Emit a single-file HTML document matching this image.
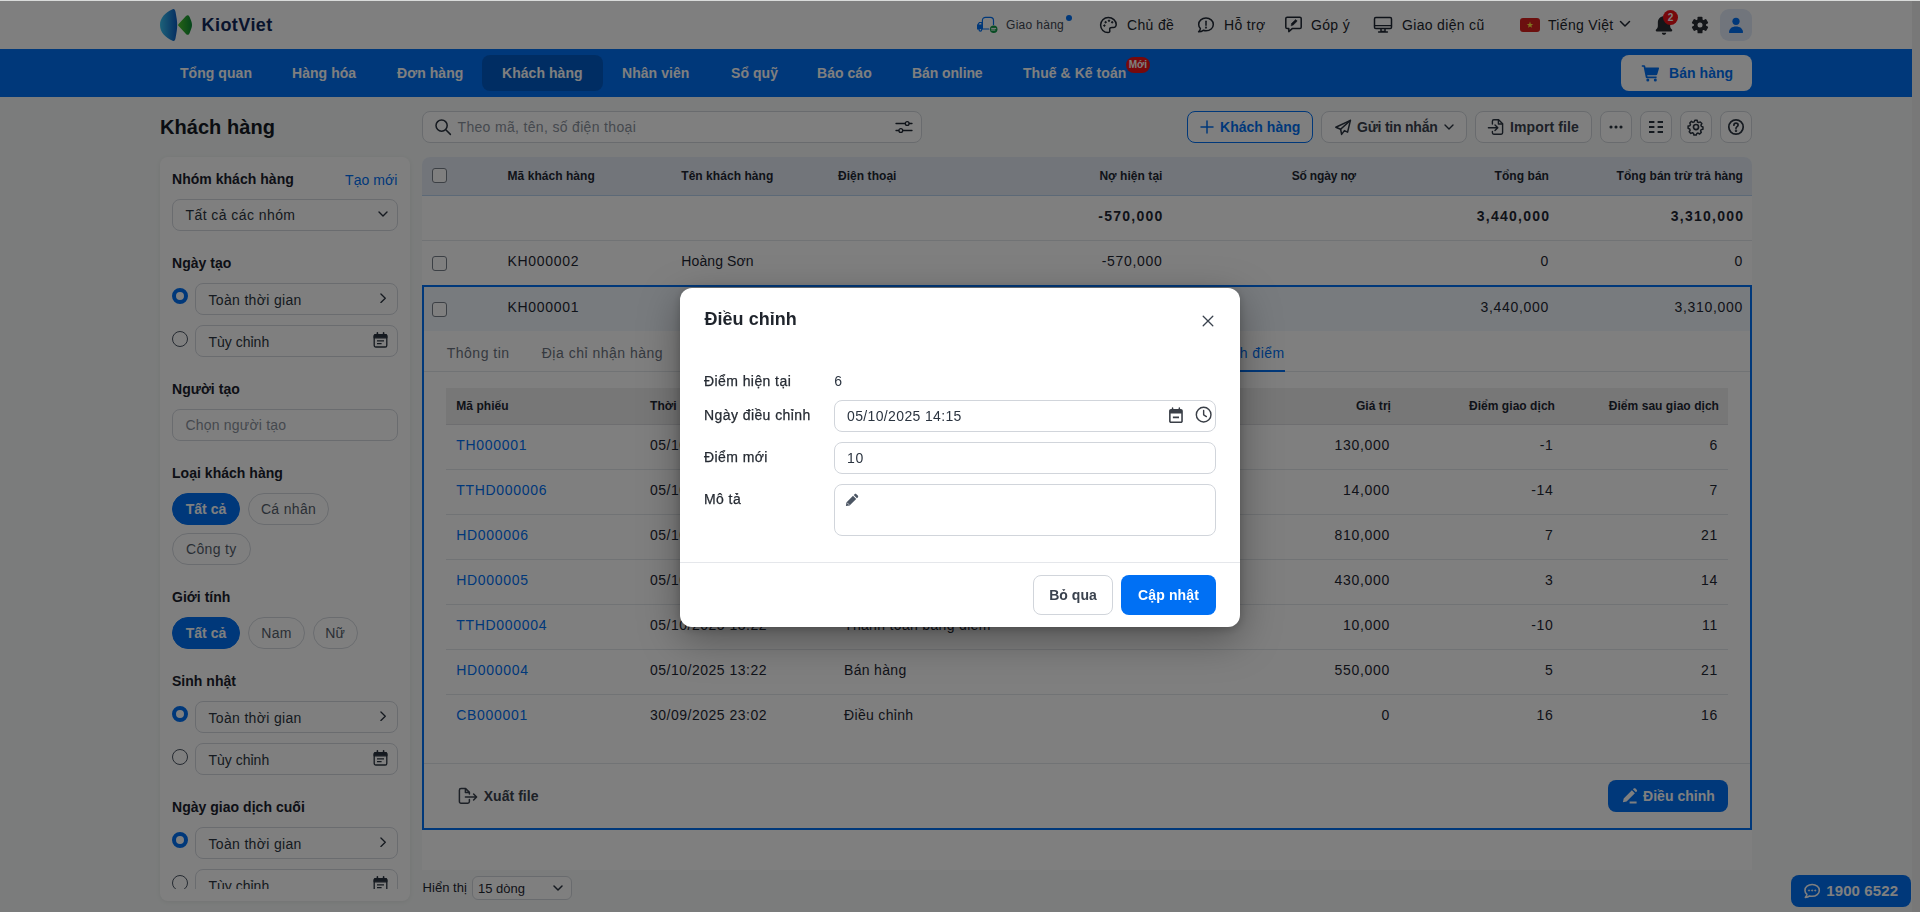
<!DOCTYPE html>
<html lang="vi">
<head>
<meta charset="utf-8">
<title>Khách hàng</title>
<style>
*{box-sizing:border-box;margin:0;padding:0}
html,body{width:1920px;height:912px;overflow:hidden}
body{font-family:"Liberation Sans",sans-serif;font-size:14px;color:#1f2733;background:#f6f9f8;position:relative;letter-spacing:.33px}
.abs{position:absolute}
b,.b{font-weight:700;letter-spacing:.03px}
.num{letter-spacing:.7px}
svg{display:block}
#page{position:absolute;left:0;top:0;width:1912px;height:912px;overflow:hidden;background:#f6f9f8}
#sbar{position:absolute;left:1912px;top:0;width:8px;height:912px;background:#f0f0f0}
#topline{position:absolute;left:0;top:0;width:1920px;height:1px;background:#d9dbda;z-index:50}
#overlay{position:absolute;left:0;top:0;width:1920px;height:912px;background:rgba(0,0,0,.5);z-index:20}
/* header */
#hdr{position:absolute;left:0;top:0;width:1912px;height:49px;background:#fff}
#nav{position:absolute;left:0;top:49px;width:1912px;height:48px;background:#0070f4}
.nv{position:absolute;top:0;height:48px;line-height:48px;color:#fff;font-weight:700;font-size:14px;letter-spacing:.05px;white-space:nowrap}
.hi{position:absolute;top:1px;height:49px;line-height:49px;white-space:nowrap;font-size:14px;color:#21252c}
.ic{position:absolute}
/* buttons */
.btn{position:absolute;top:111px;height:32px;border:1px solid #d3d7dd;border-radius:8px;background:#fff;font-weight:700;letter-spacing:.03px;color:#3a424e;white-space:nowrap}
.btn span{position:absolute;top:0;line-height:30px}
/* sidebar */
#side{position:absolute;left:160px;top:157px;width:250px;height:744px;background:#fff;border-radius:8px;box-shadow:0 1px 5px rgba(0,0,0,.07)}
#sidein{position:absolute;left:0;top:0;width:250px;height:732px;overflow:hidden}
.sl{position:absolute;left:12px;font-weight:700;letter-spacing:.03px;color:#1a212c;line-height:16px;white-space:nowrap}
.box{position:absolute;height:32px;border:1px solid #d5d9df;border-radius:8px;background:#fff;line-height:30px;white-space:nowrap;color:#2b3440}
.box span{position:absolute;left:12.5px;top:1px}
.rad{position:absolute;left:12px;width:16px;height:16px;border-radius:50%;border:1px solid #4b5563;background:#fff}
.rad.on{border:4.5px solid #0070f4}
.pill{position:absolute;height:32px;border-radius:16px;border:1px solid #d5d9df;line-height:30px;color:#555e6b;white-space:nowrap;text-align:center}
.pill.on{background:#0070f4;border-color:#0070f4;color:#fff;font-weight:700;letter-spacing:.03px}
/* table */
#tbl{position:absolute;left:422px;top:157px;width:1330px;height:713px;background:#fff;border-radius:8px 8px 0 0}
#th{position:absolute;left:0;top:0;width:1330px;height:39px;background:#e4ebf5;border-radius:8px 8px 0 0;border-bottom:1px solid #b9d2ef}
.th{position:absolute;top:0;line-height:38px;font-size:12px;font-weight:700;letter-spacing:.05px;color:#1f2733;white-space:nowrap}
.td{position:absolute;white-space:nowrap;line-height:20px}
.r{text-align:right}
.cb{position:absolute;margin:-.4px 0 0 -.4px;width:15px;height:15px;border:1px solid #79808b;border-radius:3px;background:#fff}
.hl{position:absolute;height:1px;background:#e3e6ea}
a,.lk{color:#0070f4;text-decoration:none}
/* modal */
#modal{will-change:transform;position:absolute;left:680px;top:288px;width:560px;height:339px;background:#fff;border-radius:12px;z-index:30;box-shadow:0 12px 40px rgba(0,0,0,.35),0 2px 10px rgba(0,0,0,.2)}
.ml{position:absolute;left:24px;line-height:20px;color:#262b33;white-space:nowrap;letter-spacing:.42px;-webkit-text-stroke:.25px #262b33}
.mi{position:absolute;left:154px;width:382px;height:32px;border:1px solid #d1d5db;border-radius:8px;background:#fff}
.mi span{position:absolute;left:12px;top:0;line-height:31px;color:#2b3440}
</style>
</head>
<body>
<div id="page">
  <div id="hdr">
    <!-- logo -->
    <svg class="ic" style="left:159px;top:8px" width="35" height="34" viewBox="0 0 35 34">
      <defs>
        <linearGradient id="lgb" x1="0" y1="0" x2="1" y2="0"><stop offset="0" stop-color="#3ac4f2"/><stop offset="1" stop-color="#0c5cc2"/></linearGradient>
        <linearGradient id="lgg" x1="0" y1="0" x2="1" y2="0"><stop offset="0" stop-color="#4cc62c"/><stop offset="1" stop-color="#0a8a36"/></linearGradient>
      </defs>
      <path fill="url(#lgb)" d="M13.6 1.2 C15.2 0.3 16.2 1.6 16.6 4.2 C17.6 10 18.2 13 18.2 17 C18.2 21 17.6 24.5 16.6 29.8 C16.2 32.4 15.2 33.6 13.6 32.8 C6.5 29.5 1 24.5 1 17 C1 9.5 6.5 4.5 13.6 1.2 Z"/>
      <path fill="url(#lgg)" d="M19.6 15.9 L27 8 C28.4 6.6 29.8 6.9 30.5 8.8 C31.8 12 33 14.5 33 17 C33 19.5 31.8 22 30.5 25.2 C29.8 27.1 28.4 27.4 27 26 L19.6 18.1 C19 17.5 19 16.5 19.6 15.9 Z"/>
    </svg>
    <div class="abs" style="left:201.5px;top:1.4px;line-height:49px;font-size:18px;font-weight:700;letter-spacing:.45px;color:#12295a">KiotViet</div>

    <!-- Giao hàng -->
    <svg class="ic" style="left:976px;top:15px" width="23" height="19" viewBox="0 0 23 19" fill="none">
      <path d="M6.4 14V5.4C6.4 3.4 7.8 2.3 9.5 2.3H14.4C16.4 2.3 17.5 3.5 17.5 5.4V9.6M6.4 14H12.8" stroke="#0070f4" stroke-width="1.2" stroke-linecap="round"/>
      <path d="M1 9.7L3.1 6.9H6.4V14.5H1.6C1.2 14.5 1 14.3 1 13.9Z" fill="#0070f4"/>
      <path d="M3.7 8.1H5.3V9.5H2.7Z" fill="#fff"/>
      <circle cx="4.4" cy="14.8" r="1.9" fill="#0070f4"/><circle cx="4.4" cy="14.8" r=".8" fill="#fff"/>
      <circle cx="17.7" cy="14.2" r="3.75" fill="#109a48"/>
      <path d="M15.2 13.4H20.1M15.2 15H19.3" stroke="#fff" stroke-width="1"/>
    </svg>
    <div class="hi" style="left:1006px;font-size:12px;color:#3d4551;letter-spacing:.3px">Giao hàng</div>
    <div class="abs" style="left:1066px;top:15px;width:6px;height:6px;border-radius:50%;background:#0070f4"></div>

    <!-- Chủ đề -->
    <svg class="ic" style="left:1099px;top:16px" width="19" height="18" viewBox="0 0 19 18" fill="none" stroke="#1f2733" stroke-width="1.5">
      <path d="M9.3 1.5C5 1.5 1.6 4.9 1.6 9.1C1.6 13.3 5 16.6 9 16.6C10.4 16.6 11 15.8 10.8 14.7C10.6 13.6 10.3 12.7 11.2 11.9C12 11.2 13 11.4 14.2 11.5C16 11.6 17.2 10.4 17.2 8.6C17.2 4.7 13.7 1.5 9.3 1.5Z"/>
      <circle cx="5.4" cy="9.6" r=".75" fill="#1f2733" stroke-width="1"/><circle cx="6.6" cy="6.2" r=".75" fill="#1f2733" stroke-width="1"/><circle cx="10" cy="4.7" r=".75" fill="#1f2733" stroke-width="1"/><circle cx="13.2" cy="6.3" r=".75" fill="#1f2733" stroke-width="1"/>
    </svg>
    <div class="hi" style="left:1127px">Chủ đề</div>

    <!-- Hỗ trợ -->
    <svg class="ic" style="left:1196px;top:16px" width="19" height="18" viewBox="0 0 19 18" fill="none" stroke="#1f2733" stroke-width="1.5" stroke-linecap="round" stroke-linejoin="round">
      <path d="M10 2C5.9 2 2.7 4.8 2.7 8.4C2.7 10 3.3 11.4 4.4 12.5C4.3 13.6 3.7 14.8 2.6 15.8C4.6 15.8 6.2 15.2 7.3 14.3C8.1 14.6 9 14.8 10 14.8C14.1 14.8 17.3 12 17.3 8.4C17.3 4.8 14.1 2 10 2Z"/>
      <path d="M10 5.3V9.2"/><circle cx="10" cy="11.6" r=".35" fill="#1f2733"/>
    </svg>
    <div class="hi" style="left:1224px">Hỗ trợ</div>

    <!-- Góp ý -->
    <svg class="ic" style="left:1284px;top:15px" width="19" height="19" viewBox="0 0 19 19" fill="none" stroke="#1f2733" stroke-width="1.5" stroke-linejoin="round" stroke-linecap="round">
      <path d="M3.2 2.2H15.8C16.6 2.2 17.2 2.8 17.2 3.6V12.2C17.2 13 16.6 13.6 15.8 13.6H8.2L4.8 16.6V13.6H3.2C2.4 13.6 1.8 13 1.8 12.2V3.6C1.8 2.8 2.4 2.2 3.2 2.2Z"/>
      <path d="M7.2 10.4L7.7 8.3L11.7 4.6L13.2 6.1L9.3 9.9Z" fill="#1f2733" stroke-width=".6"/>
    </svg>
    <div class="hi" style="left:1311px">Góp ý</div>

    <!-- Giao diện cũ -->
    <svg class="ic" style="left:1373px;top:16px" width="20" height="18" viewBox="0 0 20 18" fill="none" stroke="#1f2733" stroke-width="1.5" stroke-linejoin="round" stroke-linecap="round">
      <rect x="1.5" y="1.6" width="17" height="11" rx="1.3"/>
      <path d="M1.5 9.6H18.5" stroke-width="1.2"/>
      <path d="M8 12.8V15.6H12V12.8M5.6 15.9H14.4"/>
    </svg>
    <div class="hi" style="left:1402px">Giao diện cũ</div>

    <!-- flag -->
    <svg class="ic" style="left:1520px;top:17.5px" width="20" height="14" viewBox="0 0 20 14">
      <rect width="20" height="14" rx="3" fill="#d8201f"/>
      <path fill="#ffeb3b" d="M10 3.6L10.85 5.95H13.3L11.3 7.45L12.05 9.85L10 8.4L7.95 9.85L8.7 7.45L6.7 5.95H9.15Z"/>
    </svg>
    <div class="hi" style="left:1548px">Tiếng Việt</div>
    <svg class="ic" style="left:1619px;top:20px" width="12" height="8" viewBox="0 0 12 8" fill="none" stroke="#1f2733" stroke-width="1.5" stroke-linecap="round" stroke-linejoin="round"><path d="M1.5 1.5L6 6L10.5 1.5"/></svg>

    <!-- bell -->
    <svg class="ic" style="left:1653px;top:13.6px" width="22" height="23.4" viewBox="0 0 20 22" preserveAspectRatio="none">
      <path fill="#292d33" d="M10 2C6.7 2 4.4 4.5 4.4 7.8V11.2C4.4 12.6 3.8 13.6 2.8 14.6C2.2 15.2 2.5 16.4 3.5 16.4H16.5C17.5 16.4 17.8 15.2 17.2 14.6C16.2 13.6 15.6 12.6 15.6 11.2V7.8C15.6 4.5 13.3 2 10 2ZM8 17.6C8 18.8 8.9 19.6 10 19.6C11.1 19.6 12 18.8 12 17.6Z"/>
    </svg>
    <div class="abs" style="left:1663px;top:10.2px;width:15px;height:15px;border-radius:50%;background:#ee1016;color:#fff;font-size:10px;font-weight:700;line-height:15px;text-align:center;letter-spacing:0">2</div>

    <!-- gear -->
    <svg class="ic" style="left:1690px;top:14.9px" width="20" height="20" viewBox="-10 -10 20 20"><g fill="#292d33"><rect x="-2.5" y="-8.3" width="5" height="4.4" rx=".9" transform="rotate(0)"/><rect x="-2.5" y="-8.3" width="5" height="4.4" rx=".9" transform="rotate(60)"/><rect x="-2.5" y="-8.3" width="5" height="4.4" rx=".9" transform="rotate(120)"/><rect x="-2.5" y="-8.3" width="5" height="4.4" rx=".9" transform="rotate(180)"/><rect x="-2.5" y="-8.3" width="5" height="4.4" rx=".9" transform="rotate(240)"/><rect x="-2.5" y="-8.3" width="5" height="4.4" rx=".9" transform="rotate(300)"/><circle r="6.1"/></g><circle r="2.5" fill="#fff"/></svg>

    <!-- user -->
    <div class="abs" style="left:1720px;top:9px;width:32px;height:32px;border-radius:9px;background:#e2ebf9"></div>
    <svg class="ic" style="left:1728px;top:17px" width="16" height="16" viewBox="0 0 16 16">
      <circle cx="8" cy="4.3" r="3.6" fill="#0070f4"/>
      <path fill="#0070f4" d="M1 15.6C1 11.7 4 9.6 8 9.6C12 9.6 15 11.7 15 15.6C15 15.9 14.8 16 14.5 16H1.5C1.2 16 1 15.9 1 15.6Z"/>
    </svg>
  </div>
  <div id="nav">
    <div class="abs" style="left:482px;top:6px;width:121px;height:36px;border-radius:8px;background:#005bc7"></div>
    <div class="nv" style="left:180px">Tổng quan</div>
    <div class="nv" style="left:292px">Hàng hóa</div>
    <div class="nv" style="left:397px">Đơn hàng</div>
    <div class="nv" style="left:502px">Khách hàng</div>
    <div class="nv" style="left:622px">Nhân viên</div>
    <div class="nv" style="left:731px">Sổ quỹ</div>
    <div class="nv" style="left:817px">Báo cáo</div>
    <div class="nv" style="left:912px;letter-spacing:-.1px">Bán online</div>
    <div class="nv" style="left:1023px">Thuế &amp; Kế toán</div>
    <div class="abs" style="left:1125.7px;top:7.6px;width:24.3px;height:16px;border-radius:8px;background:#ec1218;color:#fff;font-size:10px;font-weight:700;line-height:15px;text-align:center;letter-spacing:0">Mới</div>
    <div class="abs" style="left:1621px;top:6px;width:131px;height:36px;border-radius:8px;background:#fff"></div>
    <svg class="ic" style="left:1641px;top:15px" width="19" height="18" viewBox="0 0 19 18">
      <path fill="#0070f4" d="M.8 1.2H3.2C3.7 1.2 4.1 1.5 4.2 2L4.5 3.4H17.2C17.8 3.4 18.2 4 18 4.5L16.3 10.2C16.1 10.8 15.6 11.2 15 11.2H6.2L6.5 12.6H15.6V14.2H5.8C5.3 14.2 4.9 13.9 4.8 13.4L2.6 2.8H.8Z"/>
      <circle cx="6.8" cy="16" r="1.5" fill="#0070f4"/><circle cx="14.3" cy="16" r="1.5" fill="#0070f4"/>
    </svg>
    <div class="nv" style="left:1669px;color:#0070f4">Bán hàng</div>
  </div>
  <div id="main">
    <div class="abs b" style="left:160px;top:112px;font-size:20px;line-height:30px;color:#141a24;letter-spacing:.05px">Khách hàng</div>
    <!-- search -->
    <div class="abs" style="left:422px;top:111px;width:500px;height:32px;border:1px solid #d3d7dd;border-radius:8px;background:#fff"></div>
    <svg class="ic" style="left:434px;top:118px" width="18" height="18" viewBox="0 0 18 18" fill="none" stroke="#2b3440" stroke-width="1.5" stroke-linecap="round"><circle cx="7.6" cy="7.6" r="5.6"/><path d="M11.8 11.8L16.4 16.4"/></svg>
    <div class="abs" style="left:457.5px;top:111px;line-height:32px;color:#8b929d;white-space:nowrap;letter-spacing:.33px">Theo mã, tên, số điện thoại</div>
    <svg class="ic" style="left:895px;top:120px" width="18" height="14" viewBox="0 0 18 14" fill="none" stroke="#1f2733" stroke-width="1.3" stroke-linecap="round"><path d="M1 3.5H10M14.4 3.5H17M1 10.5H3.6M8 10.5H17"/><circle cx="12.2" cy="3.5" r="1.9"/><circle cx="5.8" cy="10.5" r="1.9"/></svg>

    <div id="side"><div id="sidein">
      <div class="sl" style="top:14.00px">Nhóm khách hàng</div>
      <div class="abs lk" style="left:185px;top:15.25px;line-height:16px;white-space:nowrap;letter-spacing:.08px">Tạo mới</div>
      <div class="box" style="left:12px;top:42px;width:226px"><span style="letter-spacing:.43px;top:0">Tất cả các nhóm</span><svg class="ic" style="left:205.2px;top:10.8px" width="10" height="7" viewBox="0 0 10 7" fill="none" stroke="#2b3440" stroke-width="1.4" stroke-linecap="round" stroke-linejoin="round"><path d="M1 1L5 5L9 1"/></svg></div>
      <div class="sl" style="top:98.00px">Ngày tạo</div>
      <div class="rad on" style="top:131.3px"></div>
      <div class="box" style="left:35px;top:126px;width:203px"><span>Toàn thời gian</span><svg class="ic" style="left:184.1px;top:9.1px" width="6.6" height="10.4" viewBox="0 0 7 11" fill="none" stroke="#2b3440" stroke-width="1.4" stroke-linecap="round" stroke-linejoin="round"><path d="M1 1L5.6 5.5L1 10"/></svg></div>
      <div class="rad" style="top:174px"></div>
      <div class="box" style="left:35px;top:168px;width:203px"><span style="letter-spacing:0">Tùy chỉnh</span><svg class="ic" style="left:176.5px;top:6px" width="15" height="16" viewBox="0 0 15 16" fill="none" stroke="#2b3440" stroke-width="1.3" stroke-linejoin="round"><rect x="1.2" y="2.6" width="12.6" height="12.4" rx="1.6"/><path d="M1.2 3.6C1.2 3 1.7 2.6 2.4 2.6H12.6C13.3 2.6 13.8 3 13.8 3.6V5.8H1.2Z" fill="#2b3440"/><path d="M4.4 .8V3.4M10.6 .8V3.4" stroke-linecap="round" stroke-width="1.6"/><path d="M4 8.8H11M4 11.6H8.6" stroke-width="1.2"/></svg></div>
      <div class="sl" style="top:224.00px">Người tạo</div>
      <div class="box" style="left:12px;top:252px;width:226px;color:#8b929d"><span style="top:0;letter-spacing:.2px">Chọn người tạo</span></div>
      <div class="sl" style="top:308.00px">Loại khách hàng</div>
      <div class="pill on" style="left:12px;top:336px;width:68px">Tất cả</div>
      <div class="pill" style="left:88px;top:336px;width:81px">Cá nhân</div>
      <div class="pill" style="left:12px;top:376px;width:78.5px">Công ty</div>
      <div class="sl" style="top:432.00px">Giới tính</div>
      <div class="pill on" style="left:12px;top:460px;width:68px">Tất cả</div>
      <div class="pill" style="left:88px;top:460px;width:57px">Nam</div>
      <div class="pill" style="left:153px;top:460px;width:44.5px">Nữ</div>
      <div class="sl" style="top:516.00px">Sinh nhật</div>
      <div class="rad on" style="top:549.3px"></div>
      <div class="box" style="left:35px;top:544px;width:203px"><span>Toàn thời gian</span><svg class="ic" style="left:184.1px;top:9.1px" width="6.6" height="10.4" viewBox="0 0 7 11" fill="none" stroke="#2b3440" stroke-width="1.4" stroke-linecap="round" stroke-linejoin="round"><path d="M1 1L5.6 5.5L1 10"/></svg></div>
      <div class="rad" style="top:592px"></div>
      <div class="box" style="left:35px;top:586px;width:203px"><span style="letter-spacing:0">Tùy chỉnh</span><svg class="ic" style="left:176.5px;top:6px" width="15" height="16" viewBox="0 0 15 16" fill="none" stroke="#2b3440" stroke-width="1.3" stroke-linejoin="round"><rect x="1.2" y="2.6" width="12.6" height="12.4" rx="1.6"/><path d="M1.2 3.6C1.2 3 1.7 2.6 2.4 2.6H12.6C13.3 2.6 13.8 3 13.8 3.6V5.8H1.2Z" fill="#2b3440"/><path d="M4.4 .8V3.4M10.6 .8V3.4" stroke-linecap="round" stroke-width="1.6"/><path d="M4 8.8H11M4 11.6H8.6" stroke-width="1.2"/></svg></div>
      <div class="sl" style="top:642.00px">Ngày giao dịch cuối</div>
      <div class="rad on" style="top:675.3px"></div>
      <div class="box" style="left:35px;top:670px;width:203px"><span>Toàn thời gian</span><svg class="ic" style="left:184.1px;top:9.1px" width="6.6" height="10.4" viewBox="0 0 7 11" fill="none" stroke="#2b3440" stroke-width="1.4" stroke-linecap="round" stroke-linejoin="round"><path d="M1 1L5.6 5.5L1 10"/></svg></div>
      <div class="rad" style="top:718px"></div>
      <div class="box" style="left:35px;top:712px;width:203px"><span style="letter-spacing:0">Tùy chỉnh</span><svg class="ic" style="left:176.5px;top:6px" width="15" height="16" viewBox="0 0 15 16" fill="none" stroke="#2b3440" stroke-width="1.3" stroke-linejoin="round"><rect x="1.2" y="2.6" width="12.6" height="12.4" rx="1.6"/><path d="M1.2 3.6C1.2 3 1.7 2.6 2.4 2.6H12.6C13.3 2.6 13.8 3 13.8 3.6V5.8H1.2Z" fill="#2b3440"/><path d="M4.4 .8V3.4M10.6 .8V3.4" stroke-linecap="round" stroke-width="1.6"/><path d="M4 8.8H11M4 11.6H8.6" stroke-width="1.2"/></svg></div>
    </div></div>
    <div id="tbl">
      <div id="th">
        <div class="cb" style="left:10.5px;top:11.5px"></div>
        <div class="th" style="left:85.5px">Mã khách hàng</div>
        <div class="th" style="left:259.25px">Tên khách hàng</div>
        <div class="th" style="left:416px">Điện thoại</div>
        <div class="th r" style="right:589.5px">Nợ hiện tại</div>
        <div class="th r" style="right:396px;letter-spacing:-.15px">Số ngày nợ</div>
        <div class="th r" style="right:203px">Tổng bán</div>
        <div class="th r" style="right:9px">Tổng bán trừ trả hàng</div>
      </div>
      <div class="td b num" style="right:588.5px;top:48.9px;letter-spacing:1.25px">-570,000</div>
      <div class="td b num" style="right:203px;top:48.9px;letter-spacing:1.25px;margin-right:-1.25px">3,440,000</div>
      <div class="td b num" style="right:9px;top:48.9px;letter-spacing:1.25px;margin-right:-1.25px">3,310,000</div>
      <div class="hl" style="left:0;top:83px;width:1330px"></div>
      <div class="cb" style="left:10.5px;top:99.5px"></div>
      <div class="td num" style="left:85.5px;top:94.4px;">KH000002</div>
      <div class="td " style="left:259.25px;top:94.4px;letter-spacing:.12px">Hoàng Sơn</div>
      <div class="td num" style="right:589.5px;top:94.4px;">-570,000</div>
      <div class="td num" style="right:203px;top:94.4px;">0</div>
      <div class="td num" style="right:9px;top:94.4px;">0</div>
      <div class="abs" style="left:0;top:128px;width:1330px;height:545px;border:2px solid #0070f4"></div>
      <div class="abs" style="left:2px;top:130px;width:1326px;height:44px;background:#f0f6fc"></div>
      <div class="cb" style="left:10.5px;top:145.25px"></div>
      <div class="td num" style="left:85.5px;top:140.15px;">KH000001</div>
      <div class="td " style="left:259.25px;top:140.15px;">Nguyễn Văn An</div>
      <div class="td num" style="right:203px;top:140.15px;">3,440,000</div>
      <div class="td num" style="right:9px;top:140.15px;">3,310,000</div>
      <div class="td " style="left:24.75px;top:186.2px;letter-spacing:.5px;color:#6b7380">Thông tin</div>
      <div class="td " style="left:119.75px;top:186.2px;letter-spacing:.5px;color:#6b7380">Địa chỉ nhận hàng</div>
      <div class="td " style="left:272px;top:186.2px;letter-spacing:.5px;color:#6b7380">Nợ cần thu từ khách</div>
      <div class="td " style="left:444px;top:186.2px;letter-spacing:.5px;color:#6b7380">Lịch sử bán/trả hàng</div>
      <div class="td " style="right:467.3px;top:186.2px;letter-spacing:.5px;color:#0070f4">Lịch sử tích điểm</div>
      <div class="hl" style="left:2px;top:214px;width:1326px"></div>
      <div class="abs" style="left:748px;top:212.5px;width:114.70000000000005px;height:2px;background:#0070f4"></div>
      <div class="abs" style="left:24px;top:231px;width:1282px;height:37px;background:#eeeeef;border-bottom:1px solid #dcdde0"></div>
      <div class="th" style="left:34.25px;top:231px;line-height:36px">Mã phiếu</div>
      <div class="th" style="left:228px;top:231px;line-height:36px">Thời gian</div>
      <div class="th" style="left:422px;top:231px;line-height:36px">Loại</div>
      <div class="th" style="right:361px;top:231px;line-height:36px">Giá trị</div>
      <div class="th" style="right:197px;top:231px;line-height:36px">Điểm giao dịch</div>
      <div class="th" style="right:33px;top:231px;line-height:36px">Điểm sau giao dịch</div>
      <div class="td num lk" style="left:34.25px;top:278.15px;">TH000001</div>
      <div class="td num" style="left:228px;top:278.15px;letter-spacing:.5px">05/10/2025 14:10</div>
      <div class="td " style="left:422px;top:278.15px;">Trả hàng</div>
      <div class="td num" style="right:362px;top:278.15px;">130,000</div>
      <div class="td num" style="right:198.5px;top:278.15px;">-1</div>
      <div class="td num" style="right:34px;top:278.15px;">6</div>
      <div class="hl" style="left:24px;top:312px;width:1282px"></div>
      <div class="td num lk" style="left:34.25px;top:323.15px;">TTHD000006</div>
      <div class="td num" style="left:228px;top:323.15px;letter-spacing:.5px">05/10/2025 14:05</div>
      <div class="td " style="left:422px;top:323.15px;">Thanh toán bằng điểm</div>
      <div class="td num" style="right:362px;top:323.15px;">14,000</div>
      <div class="td num" style="right:198.5px;top:323.15px;">-14</div>
      <div class="td num" style="right:34px;top:323.15px;">7</div>
      <div class="hl" style="left:24px;top:357px;width:1282px"></div>
      <div class="td num lk" style="left:34.25px;top:368.15px;">HD000006</div>
      <div class="td num" style="left:228px;top:368.15px;letter-spacing:.5px">05/10/2025 14:05</div>
      <div class="td " style="left:422px;top:368.15px;">Bán hàng</div>
      <div class="td num" style="right:362px;top:368.15px;">810,000</div>
      <div class="td num" style="right:198.5px;top:368.15px;">7</div>
      <div class="td num" style="right:34px;top:368.15px;">21</div>
      <div class="hl" style="left:24px;top:402px;width:1282px"></div>
      <div class="td num lk" style="left:34.25px;top:413.15px;">HD000005</div>
      <div class="td num" style="left:228px;top:413.15px;letter-spacing:.5px">05/10/2025 13:30</div>
      <div class="td " style="left:422px;top:413.15px;">Bán hàng</div>
      <div class="td num" style="right:362px;top:413.15px;">430,000</div>
      <div class="td num" style="right:198.5px;top:413.15px;">3</div>
      <div class="td num" style="right:34px;top:413.15px;">14</div>
      <div class="hl" style="left:24px;top:447px;width:1282px"></div>
      <div class="td num lk" style="left:34.25px;top:458.15px;">TTHD000004</div>
      <div class="td num" style="left:228px;top:458.15px;letter-spacing:.5px">05/10/2025 13:22</div>
      <div class="td " style="left:422px;top:458.15px;">Thanh toán bằng điểm</div>
      <div class="td num" style="right:362px;top:458.15px;">10,000</div>
      <div class="td num" style="right:198.5px;top:458.15px;">-10</div>
      <div class="td num" style="right:34px;top:458.15px;">11</div>
      <div class="hl" style="left:24px;top:492px;width:1282px"></div>
      <div class="td num lk" style="left:34.25px;top:503.15px;">HD000004</div>
      <div class="td num" style="left:228px;top:503.15px;letter-spacing:.5px">05/10/2025 13:22</div>
      <div class="td " style="left:422px;top:503.15px;">Bán hàng</div>
      <div class="td num" style="right:362px;top:503.15px;">550,000</div>
      <div class="td num" style="right:198.5px;top:503.15px;">5</div>
      <div class="td num" style="right:34px;top:503.15px;">21</div>
      <div class="hl" style="left:24px;top:537px;width:1282px"></div>
      <div class="td num lk" style="left:34.25px;top:548.15px;">CB000001</div>
      <div class="td num" style="left:228px;top:548.15px;letter-spacing:.5px">30/09/2025 23:02</div>
      <div class="td " style="left:422px;top:548.15px;">Điều chỉnh</div>
      <div class="td num" style="right:362px;top:548.15px;">0</div>
      <div class="td num" style="right:198.5px;top:548.15px;">16</div>
      <div class="td num" style="right:34px;top:548.15px;">16</div>
      <div class="hl" style="left:2px;top:606px;width:1326px"></div>
      <svg class="ic" style="left:36px;top:630px" width="20" height="18" viewBox="0 0 20 18" fill="none" stroke="#3a424e" stroke-width="1.5" stroke-linejoin="round" stroke-linecap="round"><path d="M11.4 12.6V14.6C11.4 15.5 10.7 16.2 9.8 16.2H3C2.1 16.2 1.4 15.5 1.4 14.6V3.2C1.4 2.3 2.1 1.6 3 1.6H7.6L11.4 5.4V7"/><path d="M7.4 1.8V5.6H11.2"/><path d="M7.4 10H18.4M15.6 7L18.6 10L15.6 13"/></svg>
      <div class="td b" style="left:61.75px;top:628.9px;color:#3a424e">Xuất file</div>
      <div class="abs" style="left:1186px;top:623px;width:120px;height:32px;border-radius:8px;background:#0070f4"></div>
      <svg class="ic" style="left:1199px;top:630.5px" width="17" height="17" viewBox="0 0 17 17"><path fill="#fff" d="M10.9 2.2L13.9 5.2L5.6 13.5L1.9 14.3L2.7 10.6ZM11.9 1.3L12.7.5C13.2 0 14 0 14.5.5L15.7 1.7C16.2 2.2 16.2 3 15.7 3.5L14.9 4.3ZM8.6 13.6H15.6V15.4H8.6Z"/></svg>
      <div class="td b" style="left:1221px;top:628.9px;color:#fff">Điều chỉnh</div>
    </div>
    <div class="abs" style="left:422.5px;top:878.1px;font-size:13px;line-height:18px;white-space:nowrap;letter-spacing:.05px;margin-top:.75px">Hiển thị</div>
    <div class="abs" style="left:472px;top:876px;width:100px;height:24px;border:1px solid #d3d7dd;border-radius:6px;background:#fff;font-size:13px;line-height:22px"><span class="abs" style="left:5px;top:.5px;white-space:nowrap;letter-spacing:0">15 dòng</span><svg class="ic" style="left:79.5px;top:8px" width="10" height="7" viewBox="0 0 10 7" fill="none" stroke="#2b3440" stroke-width="1.5" stroke-linecap="round" stroke-linejoin="round"><path d="M1 1L5 5L9 1"/></svg></div>
    <div class="abs" style="left:1791px;top:875px;width:120px;height:32px;border-radius:8px;background:#0070f4"></div>
    <svg class="ic" style="left:1803.2px;top:882.8px" width="17.5" height="16.5" viewBox="0 0 18 17" fill="none" stroke="#fff" stroke-width="1.6" stroke-linejoin="round"><path d="M9.4 1.6C5.3 1.6 2 4.2 2 7.6C2 9.2 2.8 10.6 4 11.7C3.9 12.8 3.4 13.9 2.4 14.8C4.3 14.8 5.8 14.2 6.8 13.3C7.6 13.5 8.5 13.6 9.4 13.6C13.5 13.6 16.8 11 16.8 7.6C16.8 4.2 13.5 1.6 9.4 1.6Z"/><circle cx="6.2" cy="7.7" r=".7" fill="#fff" stroke-width=".6"/><circle cx="9.4" cy="7.7" r=".7" fill="#fff" stroke-width=".6"/><circle cx="12.6" cy="7.7" r=".7" fill="#fff" stroke-width=".6"/></svg>
    <div class="abs b" style="left:1826.3px;top:880.8px;line-height:20px;color:#fff;font-size:15px;white-space:nowrap;letter-spacing:.1px">1900 6522</div>
    <!-- buttons -->
    <div class="btn" style="left:1187px;width:126px;border-color:#0070f4;color:#0070f4">
      <svg class="ic" style="left:12px;top:8px" width="14" height="14" viewBox="0 0 14 14" fill="none" stroke="#0070f4" stroke-width="1.5" stroke-linecap="round"><path d="M7 1V13M1 7H13"/></svg>
      <span style="left:32px">Khách hàng</span>
    </div>
    <div class="btn" style="left:1321px;width:146px">
      <svg class="ic" style="left:12px;top:7px" width="18" height="17" viewBox="0 0 18 17" fill="none" stroke="#2b3440" stroke-width="1.5" stroke-linejoin="round" stroke-linecap="round"><path d="M16.4 1.4L1.8 8.2L6.6 10.2L7.6 15.4L10.4 11.6L13.6 13.2Z"/><path d="M16.4 1.4L6.6 10.2"/></svg>
      <span style="left:35px;letter-spacing:-.22px">Gửi tin nhắn</span>
      <svg class="ic" style="left:122px;top:12px" width="10" height="7" viewBox="0 0 10 7" fill="none" stroke="#2b3440" stroke-width="1.4" stroke-linecap="round" stroke-linejoin="round"><path d="M1 1L5 5L9 1"/></svg>
    </div>
    <div class="btn" style="left:1475px;width:117px">
      <svg class="ic" style="left:11px;top:6px" width="18" height="18" viewBox="0 0 18 18" fill="none" stroke="#2b3440" stroke-width="1.4" stroke-linejoin="round" stroke-linecap="round"><path d="M5.4 6V3.2C5.4 2.4 6 1.8 6.8 1.8H11.6L15.6 5.8V14.8C15.6 15.6 15 16.2 14.2 16.2H6.8C6 16.2 5.4 15.6 5.4 14.8V13.4"/><path d="M11.4 1.9V6H15.5"/><path d="M1.4 9.8H10.6M8 7L10.8 9.8L8 12.6"/></svg>
      <span style="left:34px;letter-spacing:.12px">Import file</span>
    </div>
    <div class="btn" style="left:1600px;width:32px">
      <svg class="ic" style="left:8px;top:13px" width="14" height="4" viewBox="0 0 14 4" fill="#2b3440"><circle cx="2" cy="2" r="1.55"/><circle cx="7" cy="2" r="1.55"/><circle cx="12" cy="2" r="1.55"/></svg>
    </div>
    <div class="btn" style="left:1640px;width:32px">
      <svg class="ic" style="left:7px;top:8px" width="16" height="14" viewBox="0 0 16 14" fill="none" stroke="#2b3440" stroke-width="1.8"><path d="M1 2H6.4M9.6 2H15M1 7H6.4M9.6 7H15M1 12H6.4M9.6 12H15"/></svg>
    </div>
    <div class="btn" style="left:1680px;width:32px">
      <svg class="ic" style="left:6px;top:6px" width="18" height="18" viewBox="0 0 24 24" fill="none" stroke="#2b3440" stroke-width="2.2" stroke-linejoin="round"><path d="M10.3 2.6h3.4l.5 2.6 1.7.9 2.4-1 2.4 2.4-1.4 2.3.6 1.8 2.4 1v3.4l-2.6.5-.9 1.7 1 2.4-2.4 2.4-2.3-1.4-1.8.6-1 2.4h-3.4l-.5-2.6-1.7-.9-2.4 1-2.4-2.4 1.4-2.3-.6-1.8-2.4-1v-3.4l2.6-.5.9-1.7-1-2.4 2.4-2.4 2.3 1.4 1.8-.6z" transform="translate(12 12) scale(.9) translate(-12 -12.6)"/><circle cx="12" cy="12" r="3.4"/></svg>
    </div>
    <div class="btn" style="left:1720px;width:32px">
      <svg class="ic" style="left:6px;top:6px" width="18" height="18" viewBox="0 0 18 18" fill="none" stroke="#2b3440" stroke-width="1.7" stroke-linecap="round"><circle cx="9" cy="9" r="7.2"/><path d="M6.9 7.2C6.9 5.9 7.8 5.1 9 5.1C10.2 5.1 11.1 5.9 11.1 7C11.1 8.6 9 8.6 9 10.3"/><circle cx="9" cy="12.8" r=".4" fill="#2b3440"/></svg>
    </div>
  </div>
</div>
<div id="sbar"></div>
<div id="overlay"></div>
<div id="modal">
  <div class="abs b" style="left:24.5px;top:18.3px;font-size:18px;line-height:26px;color:#1f242c;white-space:nowrap">Điều chỉnh</div>
  <svg class="ic" style="left:522px;top:26.5px" width="12" height="12" viewBox="0 0 12 12" fill="none" stroke="#3a424e" stroke-width="1.3" stroke-linecap="round"><path d="M1.2 1.2L10.8 10.8M10.8 1.2L1.2 10.8"/></svg>
  <div class="ml" style="top:83.4px">Điểm hiện tại</div>
  <div class="abs num" style="left:154.25px;top:83.4px;line-height:20px;color:#2b3440">6</div>
  <div class="ml" style="top:117.15px">Ngày điều chỉnh</div>
  <div class="mi" style="top:112px"><span class="num" style="letter-spacing:.36px">05/10/2025 14:15</span>
    <svg class="ic" style="left:333.4px;top:6.2px" width="15.9" height="16.65" viewBox="0 0 15 16" preserveAspectRatio="none"><path fill="#3a3f47" d="M3.6.9C3.6.5 3.9.2 4.3.2S5 .5 5 .9V2H10V.9C10 .5 10.3.2 10.7.2S11.4.5 11.4.9V2H12.2C13.2 2 14 2.8 14 3.8V13.6C14 14.6 13.2 15.4 12.2 15.4H2.8C1.8 15.4 1 14.6 1 13.6V3.8C1 2.8 1.8 2 2.8 2H3.6ZM2.5 6.2V13.4C2.5 13.7 2.7 13.9 3 13.9H12C12.3 13.9 12.5 13.7 12.5 13.4V6.2ZM4.6 9.2H10.4V10.8H4.6Z" fill-rule="evenodd"/></svg>
    <svg class="ic" style="left:359.5px;top:5.2px" width="17.3" height="17.3" viewBox="0 0 17 17" fill="none" stroke="#3a3f47" stroke-width="1.4" stroke-linecap="round" stroke-linejoin="round"><circle cx="8.5" cy="8.5" r="7.2"/><path d="M8.5 4.4V8.7L11.2 10.4"/></svg>
  </div>
  <div class="ml" style="top:159.15px">Điểm mới</div>
  <div class="mi" style="top:154px"><span class="num">10</span></div>
  <div class="ml" style="top:200.9px">Mô tả</div>
  <div class="mi" style="top:196px;height:52px">
    <svg class="ic" style="left:10.2px;top:7.6px" width="14" height="14" viewBox="0 0 14 14"><path fill="#4b5563" d="M9.6 1.2C10.1.7 10.9.7 11.4 1.2L12.8 2.6C13.3 3.1 13.3 3.9 12.8 4.4L11.9 5.3L8.7 2.1ZM8 2.8L11.2 6L4.6 12.6L.9 13.1L1.4 9.4Z"/><path d="M2.2 9.8L4.2 11.8" stroke="#fff" stroke-width=".7"/></svg>
  </div>
  <div class="abs" style="left:0;top:274px;width:560px;height:1px;background:#e5e7eb"></div>
  <div class="abs b" style="left:353px;top:287px;width:80px;height:40px;border:1px solid #d1d5db;border-radius:8px;line-height:38px;text-align:center;color:#3a424e">Bỏ qua</div>
  <div class="abs b" style="left:441px;top:287px;width:95px;height:40px;border-radius:8px;line-height:40px;text-align:center;color:#fff;background:#0070f4;letter-spacing:.12px">Cập nhật</div>
</div>
<div id="topline"></div>
</body>
</html>
